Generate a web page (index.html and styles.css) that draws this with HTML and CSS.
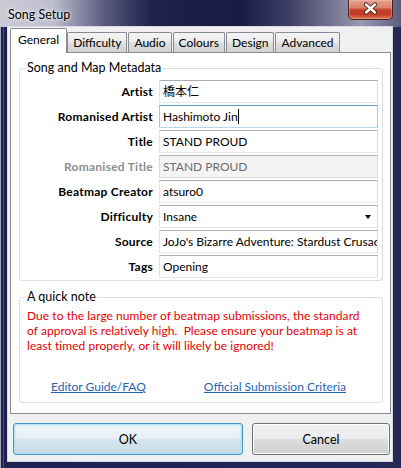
FILE: index.html
```html
<!DOCTYPE html>
<html>
<head>
<meta charset="utf-8">
<link rel="stylesheet" href="styles.css">
</head>
<body>
<div class="window">
  <div class="titlebar">
    <span class="title">Song Setup</span>
    <div class="close">
      <svg width="45" height="20" viewBox="0 0 45 20">
        <path d="M18 5.5 L27 13.5 M27 5.5 L18 13.5" stroke="#4a1a14" stroke-width="4.2" stroke-linecap="round"/>
        <path d="M18 5.5 L27 13.5 M27 5.5 L18 13.5" stroke="#ffffff" stroke-width="2.4" stroke-linecap="round"/>
      </svg>
    </div>
  </div>
  <div class="client">
    <div class="tabs">
      <div class="tab active">General</div>
      <div class="tab">Difficulty</div>
      <div class="tab">Audio</div>
      <div class="tab">Colours</div>
      <div class="tab">Design</div>
      <div class="tab">Advanced</div>
    </div>
    <div class="panel">
      <fieldset class="group meta">
        <legend>Song and Map Metadata</legend>
        <div class="form">
          <label class="lbl">Artist</label>
          <div class="field">橋本仁</div>
          <label class="lbl">Romanised Artist</label>
          <div class="field focused">Hashimoto Jin<span class="caret"></span></div>
          <label class="lbl">Title</label>
          <div class="field">STAND PROUD</div>
          <label class="lbl disabled">Romanised Title</label>
          <div class="field disabled">STAND PROUD</div>
          <label class="lbl">Beatmap Creator</label>
          <div class="field">atsuro0</div>
          <label class="lbl">Difficulty</label>
          <div class="field select"><span>Insane</span><span class="arrow"></span></div>
          <label class="lbl">Source</label>
          <div class="field">JoJo's Bizarre Adventure: Stardust Crusaders</div>
          <label class="lbl">Tags</label>
          <div class="field">Opening</div>
        </div>
      </fieldset>
      <fieldset class="group note">
        <legend>A quick note</legend>
        <p class="warning">Due to the large number of beatmap submissions, the standard<br>of approval is relatively high.&nbsp; Please ensure your beatmap is at<br>least timed properly, or it will likely be ignored!</p>
        <div class="links">
          <a class="link">Editor Guide/FAQ</a>
          <a class="link">Official Submission Criteria</a>
        </div>
      </fieldset>
    </div>
    <div class="buttons">
      <button class="btn ok">OK</button>
      <button class="btn cancel">Cancel</button>
    </div>
  </div>
</div>
</body>
</html>
```
FILE: styles.css
```css
html, body {
  margin: 0;
  padding: 0;
  background: #2a2650;
}
body {
  font-family: Lato, "Noto Sans CJK JP", sans-serif;
  font-size: 12px;
  color: #000;
}
.window {
  width: 401px;
  height: 468px;
  box-sizing: border-box;
  display: flex;
  flex-direction: column;
  padding: 0 9px 7px 8px;
  background:
    linear-gradient(90deg, #cbcbd8 0%, #bdbdcd 13%, #5a5b80 26%, #202149 38%, #1a1b42 60%, #3e3f66 72%, #7c7c98 84%, #9a9ab0 90%, #5b5c80 100%) top left / 100% 27px no-repeat,
    linear-gradient(90deg, #a6a6ba 0, #a6a6ba 1px, #1e2052 1px, #1e2052 3px, #4e507a 3px, #4e507a 4px, #1e2052 4px, #262856 100%);
}
.titlebar {
  height: 27px;
  flex: none;
  display: flex;
  justify-content: space-between;
  align-items: flex-start;
}
.title {
  margin-top: 7px;
  font-size: 12.5px;
  color: #000;
  text-shadow: 0 0 6px rgba(255,255,255,0.9), 0 0 3px rgba(255,255,255,0.9);
}
.close {
  width: 45px;
  height: 20px;
  margin-right: -1px;
  box-sizing: border-box;
  border: 1px solid #4a2220;
  border-top: 0;
  border-radius: 0 0 5px 5px;
  background: linear-gradient(#e6a394 0%, #d98069 40%, #c2402a 52%, #c23a22 75%, #dc7a5a 100%);
  box-shadow: inset 0 0 0 1px rgba(255,200,180,0.35);
}
.close svg { display: block; margin: -1px 0 0 -1px; }

.client {
  flex: 1;
  background: #f0f0f0;
  display: flex;
  flex-direction: column;
  padding: 0 1px 0 2px;
  box-shadow: 0 0 0 1px #d8d9e4;
}
.tabs {
  height: 25px;
  flex: none;
  display: flex;
  align-items: flex-end;
}
.tab {
  height: 20px;
  box-sizing: border-box;
  padding: 0 5px;
  margin-right: 1px;
  border: 1px solid #898c95;
  border-bottom: 0;
  border-radius: 2px 2px 0 0;
  background: linear-gradient(#f4f4f4, #ececec 45%, #dedede 55%, #d2d2d2);
  line-height: 19px;
  white-space: nowrap;
}
.tab.active {
  height: 25px;
  margin-bottom: -1px;
  margin-right: 0;
  padding: 0 7px;
  background: #fff;
  position: relative;
  z-index: 1;
  line-height: 22px;
}
.panel {
  flex: none;
  background: #fff;
  border: 1px solid #898c95;
  display: flex;
  flex-direction: column;
}
.group {
  border: 1px solid #d5dfe5;
  border-radius: 3px;
  margin: 7px 7px 0 8px;
  padding: 4px 4px 2px 6px;
  min-width: 0;
}
.group legend {
  padding: 0 1px;
  margin-left: 0;
  line-height: 16px;
  font-size: 12.5px;
}
.form {
  display: grid;
  grid-template-columns: 1fr 219px;
  column-gap: 6px;
  row-gap: 2px;
}
.lbl {
  font-weight: bold;
  text-align: right;
  line-height: 23px;
  white-space: nowrap;
  letter-spacing: 0.25px;
}
.lbl.disabled { color: #8d8d8d; }
.field {
  height: 23px;
  box-sizing: border-box;
  border: 1px solid;
  border-color: #abadb3 #dbdfe6 #e3e9ef #e2e3ea;
  background: #fff;
  padding: 0 3px;
  line-height: 21px;
  white-space: nowrap;
  overflow: hidden;
  font-size: 12px;
}
.field.focused {
  border-color: #5e9ccc #a4c9e3 #b7d9ed #a4c9e3;
}
.caret {
  display: inline-block;
  width: 1px;
  height: 15px;
  background: #000;
  vertical-align: -3px;
}
.field.disabled {
  background: #f4f4f4;
  color: #6d6d6d;
  border-color: #adb2b5 #dadada #dadada #dadada;
}
.field.select {
  display: flex;
  justify-content: space-between;
  align-items: center;
}
.arrow {
  width: 0;
  height: 0;
  border-left: 3.5px solid transparent;
  border-right: 3.5px solid transparent;
  border-top: 4px solid #000;
  margin-right: 3px;
  margin-top: 1px;
}
.note {
  margin-top: 8px;
  margin-bottom: 10px;
  padding: 3px 4px 8px 7px;
}
.note legend { margin-left: -1px; }
.warning {
  margin: 0;
  color: #e60000;
  line-height: 15px;
  white-space: nowrap;
  letter-spacing: 0.05px;
}
.links {
  margin-top: 26px;
  display: flex;
  gap: 58px;
  padding-left: 24px;
  line-height: 15px;
}
.link {
  color: #1f62b6;
  text-decoration: underline;
  cursor: pointer;
}
.buttons {
  margin-top: 9px;
  display: flex;
  gap: 9px;
  padding-left: 3px;
}
.btn {
  height: 32px;
  font-family: Lato, sans-serif;
  font-size: 12.5px;
  color: #000;
  border-radius: 3px;
  padding: 0;
}
.btn.ok {
  width: 230px;
  border: 1px solid #3c9bc4;
  background: linear-gradient(#f0f5f8, #e6eff4 48%, #d5e5ed 52%, #c8dce6);
  box-shadow: inset 0 0 0 1px #b2e3f6, inset 0 0 2px 1px rgba(120,200,235,0.6);
}
.btn.cancel {
  width: 138px;
  border: 1px solid #707070;
  background: linear-gradient(#f2f2f2, #ebebeb 48%, #dddddd 52%, #cfcfcf);
  box-shadow: inset 0 0 0 1px #fcfcfc;
}
```
